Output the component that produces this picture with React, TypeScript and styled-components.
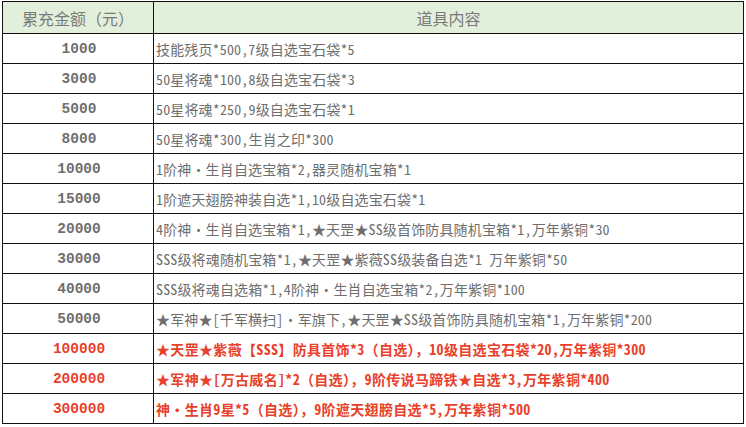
import React from "react";
import styled, { createGlobalStyle } from "styled-components";

const Global = createGlobalStyle`
  html, body { margin: 0; padding: 0; background: #fff; }
  body { font-family: "Noto Sans CJK SC", "Liberation Sans", sans-serif; }
`;

const Table = styled.div`
  margin: 1px 0 0 2px;
  width: 742px;
  display: grid;
  grid-template-columns: 151px 1fr;
  border-left: 1px solid #111;
  border-top: 1px solid #111;
  box-sizing: border-box;
`;

const HeadCell = styled.div`
  height: 32px;
  box-sizing: border-box;
  background: #e2efda;
  border-right: 1px solid #111;
  border-bottom: 1px solid #111;
  display: flex;
  align-items: center;
  justify-content: center;
  color: #7a7a7a;
  font-size: 16px;
  font-family: "Noto Sans CJK SC", sans-serif;
`;

const AmountCell = styled.div<{ $hot?: boolean }>`
  height: 30px;
  box-sizing: border-box;
  border-right: 1px solid #111;
  border-bottom: 1px solid #111;
  display: flex;
  align-items: center;
  justify-content: center;
  padding-left: 2px;
  color: ${(p) => (p.$hot ? "#e8402a" : "#6e6e6e")};
  font-family: "Liberation Mono", "Noto Sans CJK SC", monospace;
  font-weight: bold;
  font-size: 14.5px;
`;

const ContentCell = styled.div<{ $hot?: boolean }>`
  height: 30px;
  box-sizing: border-box;
  border-right: 1px solid #111;
  border-bottom: 1px solid #111;
  display: flex;
  align-items: center;
  padding-left: 2px;
  white-space: pre;
  overflow: hidden;
  color: ${(p) => (p.$hot ? "#e8402a" : "#6e6e6e")};
  font-weight: ${(p) => (p.$hot ? "bold" : "normal")};
  letter-spacing: ${(p) => (p.$hot ? "0.33px" : "0.15px")};
  font-size: 14px;
  font-family: "Noto Sans Mono CJK SC", "Noto Sans CJK SC", monospace;
`;

type Row = { amount: string; content: string; hot?: boolean };

const rows: Row[] = [
  { amount: "1000", content: "技能残页*500,7级自选宝石袋*5" },
  { amount: "3000", content: "50星将魂*100,8级自选宝石袋*3" },
  { amount: "5000", content: "50星将魂*250,9级自选宝石袋*1" },
  { amount: "8000", content: "50星将魂*300,生肖之印*300" },
  { amount: "10000", content: "1阶神・生肖自选宝箱*2,器灵随机宝箱*1" },
  { amount: "15000", content: "1阶遮天翅膀神装自选*1,10级自选宝石袋*1" },
  { amount: "20000", content: "4阶神・生肖自选宝箱*1,★天罡★SS级首饰防具随机宝箱*1,万年紫铜*30" },
  { amount: "30000", content: "SSS级将魂随机宝箱*1,★天罡★紫薇SS级装备自选*1 万年紫铜*50" },
  { amount: "40000", content: "SSS级将魂自选箱*1,4阶神・生肖自选宝箱*2,万年紫铜*100" },
  { amount: "50000", content: "★军神★[千军横扫]・军旗下,★天罡★SS级首饰防具随机宝箱*1,万年紫铜*200" },
  { amount: "100000", content: "★天罡★紫薇【SSS】防具首饰*3（自选），10级自选宝石袋*20,万年紫铜*300", hot: true },
  { amount: "200000", content: "★军神★[万古威名]*2（自选），9阶传说马蹄铁★自选*3,万年紫铜*400", hot: true },
  { amount: "300000", content: "神・生肖9星*5（自选），9阶遮天翅膀自选*5,万年紫铜*500", hot: true },
];

export default function App() {
  return (
    <>
      <Global />
      <Table>
        <HeadCell>累充金额（元）</HeadCell>
        <HeadCell>道具内容</HeadCell>
        {rows.map((r) => (
          <React.Fragment key={r.amount}>
            <AmountCell $hot={r.hot}>{r.amount}</AmountCell>
            <ContentCell $hot={r.hot}>{r.content}</ContentCell>
          </React.Fragment>
        ))}
      </Table>
    </>
  );
}
